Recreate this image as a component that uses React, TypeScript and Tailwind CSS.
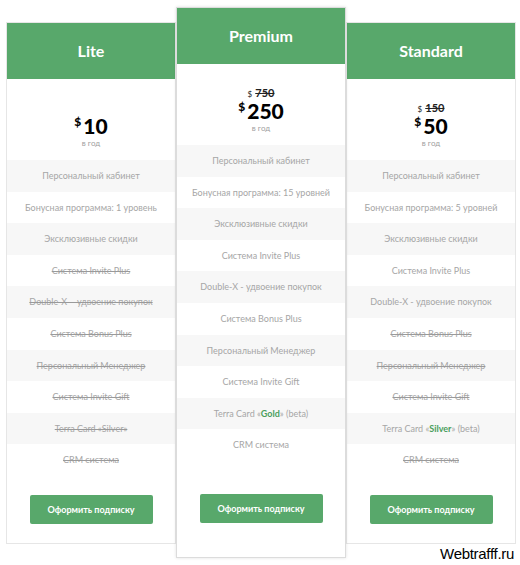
import React from "react";

type Feature = {
  text: React.ReactNode;
  off?: boolean;
};

type Plan = {
  name: string;
  price: string;
  oldPrice?: string;
  featured?: boolean;
  features: Feature[];
};

const green = (s: string) => <b className="font-bold text-[#4a9e5c]">{s}</b>;

const plans: Plan[] = [
  {
    name: "Lite",
    price: "10",
    features: [
      { text: "Персональный кабинет" },
      { text: "Бонусная программа: 1 уровень" },
      { text: "Эксклюзивные скидки" },
      { text: "Система Invite Plus", off: true },
      { text: "Double-X – удвоение покупок", off: true },
      { text: "Система Bonus Plus", off: true },
      { text: "Персональный Менеджер", off: true },
      { text: "Система Invite Gift", off: true },
      { text: "Terra Card «Silver»", off: true },
      { text: "CRM система", off: true },
    ],
  },
  {
    name: "Premium",
    price: "250",
    oldPrice: "750",
    featured: true,
    features: [
      { text: "Персональный кабинет" },
      { text: "Бонусная программа: 15 уровней" },
      { text: "Эксклюзивные скидки" },
      { text: "Система Invite Plus" },
      { text: "Double-X - удвоение покупок" },
      { text: "Система Bonus Plus" },
      { text: "Персональный Менеджер" },
      { text: "Система Invite Gift" },
      { text: <>Terra Card «{green("Gold")}» (beta)</> },
      { text: "CRM система" },
    ],
  },
  {
    name: "Standard",
    price: "50",
    oldPrice: "150",
    features: [
      { text: "Персональный кабинет" },
      { text: "Бонусная программа: 5 уровней" },
      { text: "Эксклюзивные скидки" },
      { text: "Система Invite Plus" },
      { text: "Double-X - удвоение покупок" },
      { text: "Система Bonus Plus", off: true },
      { text: "Персональный Менеджер", off: true },
      { text: "Система Invite Gift", off: true },
      { text: <>Terra Card «{green("Silver")}» (beta)</> },
      { text: "CRM система", off: true },
    ],
  },
];

function PlanCard({ plan }: { plan: Plan }) {
  return (
    <div
      className={
        plan.featured
          ? "relative z-10 mt-[7px] w-[170px] border border-[#dcdcdc] bg-white shadow-[0_0_3px_rgba(0,0,0,0.12)] pb-[34px]"
          : "mt-[22px] w-[170px] border border-[#e6e6e6] bg-white pb-[19px]"
      }
    >
      <div className="flex h-[56px] items-center justify-center bg-[#58a86b] text-[16px] font-bold text-white">
        {plan.name}
      </div>
      <div className="flex h-[81px] flex-col items-center justify-end pb-[13px]">
        {plan.oldPrice && (
          <div className="flex items-baseline gap-[3px] leading-none text-[#222]">
            <span className="text-[8px]">$</span>
            <span className="text-[11px] font-bold line-through">{plan.oldPrice}</span>
          </div>
        )}
        <div className="mt-[2px] flex items-start gap-[2px] leading-none text-black">
          <span className="mt-[1px] text-[12px] font-black">$</span>
          <span className="text-[21px] font-black">{plan.price}</span>
        </div>
        <div className="mt-[3px] text-[8px] leading-none text-[#a0a0a0]">в год</div>
      </div>
      <div>
        {plan.features.map((f, i) => (
          <div
            key={i}
            className={
              "flex h-[31.6px] items-center justify-center text-[9px] text-[#a6a6a6] " +
              (i % 2 === 0 ? "bg-[#f7f7f7]" : "bg-white") +
              (f.off ? " line-through decoration-[#9a9a9a]" : "")
            }
          >
            <span>{f.text}</span>
          </div>
        ))}
      </div>
      <div className={plan.featured ? "flex justify-center pt-[33px]" : "flex justify-center pt-[19px]"}>
        <button className="h-[29px] w-[123px] rounded-[2px] bg-[#58a86b] text-[9px] font-bold text-white">
          Оформить подписку
        </button>
      </div>
    </div>
  );
}

export default function App() {
  return (
    <div
      className="relative h-[565px] w-[520px] bg-white"
      style={{ fontFamily: "Lato, 'Open Sans', 'Liberation Sans', sans-serif" }}
    >
      <div className="flex items-start pl-[6px]">
        {plans.map((p) => (
          <PlanCard key={p.name} plan={p} />
        ))}
      </div>
      <div
        className="absolute bottom-[4px] right-[6px] text-[15px] leading-none tracking-[-0.3px] text-black"
        style={{ fontFamily: "'Liberation Sans', Arial, sans-serif" }}
      >
        Webtrafff.ru
      </div>
    </div>
  );
}
